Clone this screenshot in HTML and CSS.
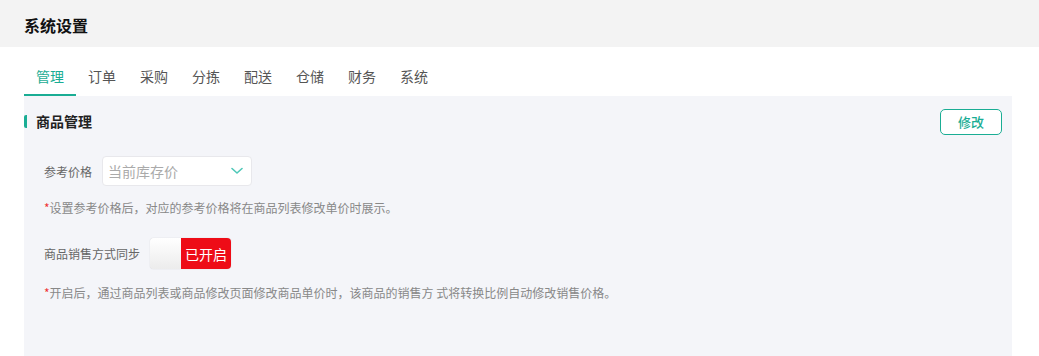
FILE: index.html
```html
<!DOCTYPE html>
<html lang="zh-CN">
<head>
    <meta charset="UTF-8">
    <title>系统设置</title>
    <link rel="stylesheet" href="styles.css">
</head>
<body>
    <div class="page-header">
        <h1 class="page-title">系统设置</h1>
    </div>
    <div class="page-body">
        <div class="tabs">
            <span class="tab tab--active">管理</span>
            <span class="tab">订单</span>
            <span class="tab">采购</span>
            <span class="tab">分拣</span>
            <span class="tab">配送</span>
            <span class="tab">仓储</span>
            <span class="tab">财务</span>
            <span class="tab">系统</span>
        </div>
        <div class="panel">
            <div class="panel__head">
                <h2 class="panel__title">商品管理</h2>
                <button class="btn-edit" type="button">修改</button>
            </div>
            <div class="form-row">
                <label class="form-label">参考价格</label>
                <div class="select">
                    <span class="select__value">当前库存价</span>
                    <svg class="select__arrow" width="12" height="8" viewBox="0 0 12 8">
                        <path d="M1 1.5 L6 6 L11 1.5" fill="none" stroke="#4fc8b8" stroke-width="1.6" stroke-linecap="round" stroke-linejoin="round"/>
                    </svg>
                </div>
            </div>
            <p class="form-tip"><span class="star">*</span>设置参考价格后，对应的参考价格将在商品列表修改单价时展示。</p>
            <div class="form-row form-row--switch">
                <label class="form-label">商品销售方式同步</label>
                <div class="switch">
                    <span class="switch__knob"></span>
                    <span class="switch__on">已开启</span>
                </div>
            </div>
            <p class="form-tip form-tip--last"><span class="star">*</span>开启后，通过商品列表或商品修改页面修改商品单价时，该商品的销售方 式将转换比例自动修改销售价格。</p>
        </div>
    </div>
</body>
</html>
```
FILE: styles.css
```css
* {
    box-sizing: border-box;
}
html, body {
    margin: 0;
    padding: 0;
    font-family: "Noto Sans CJK SC", "Microsoft YaHei", sans-serif;
    background: #fff;
}
.page-header {
    background: #f3f3f3;
    height: 47px;
    padding: 0 24px;
    display: flex;
    align-items: center;
}
.page-title {
    margin: 0;
    font-size: 16px;
    font-weight: 700;
    color: #111;
    line-height: 1;
    padding-top: 2px;
}
.page-body {
    padding: 15px 27px 0 24px;
}
.tabs {
    display: flex;
    height: 34px;
}
.tab {
    width: 52px;
    text-align: center;
    font-size: 14px;
    color: #555;
    line-height: 28px;
}
.tab--active {
    color: #1aad94;
    border-bottom: 2px solid #1aad94;
}
.panel {
    background: #f4f5f9;
    height: 270px;
    padding: 13px 10px 0 0;
}
.panel__head {
    display: flex;
    justify-content: space-between;
    align-items: center;
    height: 25px;
}
.panel__title {
    margin: 0;
    font-size: 14px;
    font-weight: 700;
    color: #222;
    border-left: 3px solid #1aad94;
    border-radius: 2px;
    padding-left: 9px;
    line-height: 13px;
}
.btn-edit {
    width: 62px;
    height: 26px;
    border: 1px solid #1aad94;
    border-radius: 5px;
    background: #fff;
    color: #1aad94;
    font-family: inherit;
    font-size: 13px;
    font-weight: 500;
    padding: 0;
    cursor: pointer;
}
.form-row {
    display: flex;
    align-items: center;
    margin-top: 22px;
    padding-left: 20px;
}
.form-label {
    font-size: 12px;
    color: #666;
    margin-right: 10px;
}
.select {
    width: 150px;
    height: 30px;
    background: #fff;
    border: 1px solid #e8e8ec;
    border-radius: 4px;
    display: flex;
    align-items: center;
    justify-content: space-between;
    padding: 0 8px 0 5px;
}
.select__value {
    font-size: 14px;
    color: #aaa;
}
.form-tip {
    margin: 13px 0 0;
    padding-left: 20px;
    font-size: 12px;
    color: #888;
}
.form-tip--last {
    margin-top: 15px;
}
.star {
    color: #e33;
}
.form-row--switch {
    margin-top: 22px;
}
.switch {
    display: flex;
    height: 31px;
    width: 81px;
    border-radius: 4px;
    overflow: hidden;
    box-shadow: 0 0 1px rgba(0, 0, 0, .25);
}
.switch__knob {
    width: 31px;
    background: linear-gradient(180deg, #fff, #ececec);
}
.switch__on {
    flex: 1;
    background: #ee0c17;
    color: #fff;
    font-size: 14px;
    display: flex;
    align-items: center;
    justify-content: center;
}
```
